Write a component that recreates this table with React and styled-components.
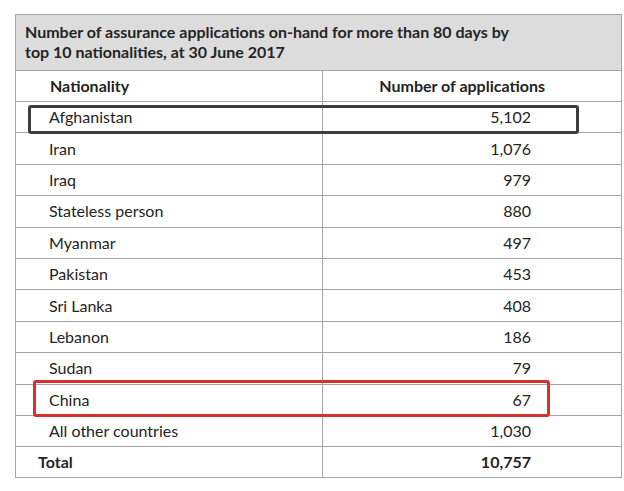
import React from "react";
import styled, { createGlobalStyle } from "styled-components";

const Global = createGlobalStyle`
  html, body { margin: 0; padding: 0; background: #ffffff; }
  body { font-family: Lato, "Open Sans", sans-serif; color: #222; }
`;

const Page = styled.div`
  width: 624px;
  height: 491px;
  padding: 14px 0 0 15px;
  box-sizing: border-box;
`;

const Wrap = styled.div`
  position: relative;
  width: 606px;
`;

const Table = styled.table`
  width: 606px;
  border-collapse: collapse;
  table-layout: fixed;
  font-size: 16px;
  color: #242424;
`;

const TitleCell = styled.th`
  background: #dcdcdc;
  border: 1px solid #a5a5a5;
  text-align: left;
  font-weight: 700;
  height: 56px;
  padding: 0 0 1px 9px;
  line-height: 20px;
  box-sizing: border-box;
`;

const Cell = styled.td`
  border: 1px solid #a5a5a5;
  height: ${(p) => p.$h || 31.4}px;
  padding: 0;
  box-sizing: border-box;
  font-weight: ${(p) => (p.$bold ? 700 : 400)};
  text-align: ${(p) => (p.$num ? "right" : "left")};
  padding-left: ${(p) => (p.$num ? 0 : p.$pl || 33)}px;
  padding-right: ${(p) => (p.$num ? p.$pr || 90 : 0)}px;
  padding-bottom: 1px;
`;

const Highlight = styled.div`
  position: absolute;
  box-sizing: border-box;
  border: 3px solid ${(p) => p.$color};
  border-radius: 3px;
  pointer-events: none;
`;

const rows = [
  ["Afghanistan", "5,102"],
  ["Iran", "1,076"],
  ["Iraq", "979"],
  ["Stateless person", "880"],
  ["Myanmar", "497"],
  ["Pakistan", "453"],
  ["Sri Lanka", "408"],
  ["Lebanon", "186"],
  ["Sudan", "79"],
  ["China", "67"],
  ["All other countries", "1,030"],
];

export default function App() {
  return (
    <>
      <Global />
      <Page>
        <Wrap>
          <Table>
            <colgroup>
              <col style={{ width: "307px" }} />
              <col style={{ width: "299px" }} />
            </colgroup>
            <thead>
              <tr>
                <TitleCell colSpan={2}>
                  Number of assurance applications on-hand for more than 80 days by
                  <br />
                  top 10 nationalities, at 30 June 2017
                </TitleCell>
              </tr>
              <tr>
                <Cell as="th" $bold $pl={34} $h={31}>Nationality</Cell>
                <Cell as="th" $bold $num $pr={76} $h={31}>Number of applications</Cell>
              </tr>
            </thead>
            <tbody>
              {rows.map(([n, v]) => (
                <tr key={n}>
                  <Cell>{n}</Cell>
                  <Cell $num>{v}</Cell>
                </tr>
              ))}
              <tr>
                <Cell $bold $pl={22} $h={30.5}>Total</Cell>
                <Cell $bold $num $h={30.5}>10,757</Cell>
              </tr>
            </tbody>
          </Table>
          <Highlight $color="#3d3d3d" style={{ left: 13, top: 91, width: 551, height: 29 }} />
          <Highlight $color="#d8302b" style={{ left: 18, top: 366, width: 517, height: 37 }} />
        </Wrap>
      </Page>
    </>
  );
}
